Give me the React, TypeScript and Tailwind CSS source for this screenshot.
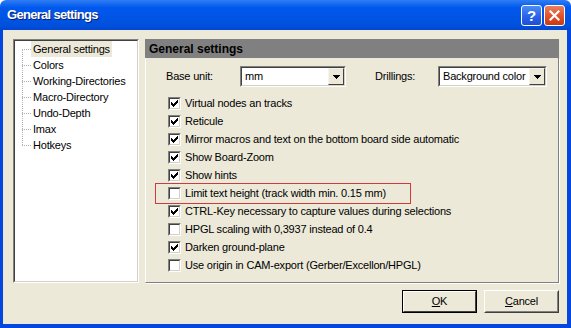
import React from 'react';

const tree = ['General settings', 'Colors', 'Working-Directories', 'Macro-Directory', 'Undo-Depth', 'Imax', 'Hotkeys'];

const options: { label: string; checked: boolean; marked?: boolean }[] = [
  { label: 'Virtual nodes an tracks', checked: true },
  { label: 'Reticule', checked: true },
  { label: 'Mirror macros and text on the bottom board side automatic', checked: true },
  { label: 'Show Board-Zoom', checked: true },
  { label: 'Show hints', checked: true },
  { label: 'Limit text height (track width min. 0.15 mm)', checked: false, marked: true },
  { label: 'CTRL-Key necessary to capture values during selections', checked: true },
  { label: 'HPGL scaling with 0,3937 instead of 0.4', checked: false },
  { label: 'Darken ground-plane', checked: true },
  { label: 'Use origin in CAM-export (Gerber/Excellon/HPGL)', checked: false },
];

function CheckBox({ checked }: { checked: boolean }) {
  return (
    <div className="w-[13px] h-[13px] border border-t-[#808080] border-l-[#808080] border-b-white border-r-white">
      <div className="w-full h-full bg-white border border-t-[#404040] border-l-[#404040] border-b-[#d4d0c8] border-r-[#d4d0c8] flex items-center justify-center">
        {checked && (
          <svg width="7" height="7" viewBox="0 0 7 7" shapeRendering="crispEdges">
            <path d="M0 2h1v3h-1zM1 3h1v3h-1zM2 4h1v3h-1zM3 3h1v3h-1zM4 2h1v3h-1zM5 1h1v3h-1zM6 0h1v3h-1z" fill="#000" />
          </svg>
        )}
      </div>
    </div>
  );
}

function Combo({ value, width }: { value: string; width: string }) {
  return (
    <div className={`${width} h-[21px] border border-t-[#808080] border-l-[#808080] border-b-white border-r-white`}>
      <div className="w-full h-full bg-white border border-t-[#404040] border-l-[#404040] border-b-[#d4d0c8] border-r-[#d4d0c8] flex items-center">
        <span className="flex-1 pl-[3px] whitespace-nowrap overflow-hidden">{value}</span>
        <div className="w-[16px] h-[17px] shrink-0 bg-[#ece9d8] border border-t-[#f4f3ee] border-l-[#f4f3ee] border-b-[#404040] border-r-[#404040] flex items-center justify-center">
          <svg width="7" height="4" viewBox="0 0 7 4" shapeRendering="crispEdges">
            <path d="M0 0h7v1h-7zM1 1h5v1h-5zM2 2h3v1h-3zM3 3h1v1h-1z" fill="#000" />
          </svg>
        </div>
      </div>
    </div>
  );
}

export default function App() {
  return (
    <div
      className="w-[571px] h-[328px] flex flex-col overflow-hidden text-[11px] tracking-[-0.2px] text-black"
      style={{ fontFamily: '"Liberation Sans", Arial, sans-serif' }}
    >
      {/* Title bar */}
      <div className="h-[30px] shrink-0 flex items-center pl-[7px] pr-[6px] rounded-t-[6px] bg-[linear-gradient(to_bottom,#2f7cf5_0%,#1d6ff0_10%,#0058ee_25%,#0054e3_60%,#0050db_88%,#0345d0_100%)]">
        <span className="flex-1 text-white font-bold text-[13px] tracking-[-0.7px] [text-shadow:1px_1px_0_#0a1f6e]">
          General settings
        </span>
        <div className="w-[21px] h-[21px] rounded-[3px] border border-white bg-[linear-gradient(to_bottom,#4d8cf6,#2a63e8_55%,#1c4fd6)] flex items-center justify-center text-white font-bold text-[15px] leading-none">
          ?
        </div>
        <div className="ml-[2px] w-[21px] h-[21px] rounded-[3px] border border-white bg-[linear-gradient(to_bottom,#e8805c,#e0502a_55%,#c63a14)] flex items-center justify-center">
          <svg width="11" height="11" viewBox="0 0 11 11">
            <path d="M1.5 1.5L9.5 9.5M9.5 1.5L1.5 9.5" stroke="#fff" strokeWidth="2.2" strokeLinecap="square" />
          </svg>
        </div>
      </div>

      {/* Body */}
      <div className="flex-1 flex flex-col bg-[#ece9d8] border-l-[3px] border-r-[4px] border-b-[4px] border-[#0347de] pl-[10px] pt-[9px] pr-[8px]">
        <div className="flex gap-[6px] h-[244px]">
          {/* Tree */}
          <div className="w-[126px] h-full border border-t-[#808080] border-l-[#808080] border-b-white border-r-white">
            <div className="relative w-full h-full bg-white border border-t-[#404040] border-l-[#404040] border-b-[#d4d0c8] border-r-[#d4d0c8]">
              <div className="absolute left-[7px] top-[8px] h-[96px] border-l border-dotted border-[#b0b0b0]" />
              {tree.map((t, i) => (
                <div key={t} className="h-[16px] flex items-center">
                  <div className="w-[9px] ml-[7px] border-t border-dotted border-[#b0b0b0]" />
                  <span className={`px-[2px] leading-[16px] ${i === 0 ? 'bg-[#ece9d8]' : ''}`}>{t}</span>
                </div>
              ))}
            </div>
          </div>

          {/* Right panel */}
          <div className="w-[414px] h-full flex flex-col">
            <div className="h-[19px] bg-[#808080] pl-[4px] flex items-center font-bold text-[12px] tracking-normal">General settings</div>
            <div className="flex-1 border-l border-l-white border-r border-r-[#808080] border-b border-b-[#808080] shadow-[1px_1px_0_#fff] pl-[20px] pt-[8px]">
              <div className="flex items-center h-[21px]">
                <span className="w-[74px]">Base unit:</span>
                <Combo value="mm" width="w-[106px]" />
                <span className="ml-[29px] w-[63px]">Drillings:</span>
                <Combo value="Background color" width="w-[109px]" />
              </div>
              <div className="mt-[7px] flex flex-col">
                {options.map((o) => (
                  <div key={o.label} className="relative h-[18px] flex items-center pl-[2px]">
                    {o.marked && (
                      <span className="absolute left-[-11px] top-[-1px] w-[256px] h-[21px] border border-[#d03a3a]" />
                    )}
                    <CheckBox checked={o.checked} />
                    <span className="ml-[4px] whitespace-nowrap">{o.label}</span>
                  </div>
                ))}
              </div>
            </div>
          </div>
        </div>

        {/* Buttons */}
        <div className="mt-[7px] flex justify-end gap-[7px]">
          <div className="w-[75px] h-[23px] border border-black">
            <div className="w-full h-full bg-[#ece9d8] border border-t-white border-l-white border-b-[#404040] border-r-[#404040] flex items-center justify-center">
              <span>
                <span className="underline">O</span>K
              </span>
            </div>
          </div>
          <div className="w-[75px] h-[23px] bg-[#ece9d8] border border-t-white border-l-white border-b-[#404040] border-r-[#404040]">
            <div className="w-full h-full border border-transparent border-b-[#808080] border-r-[#808080] flex items-center justify-center">
              <span>
                <span className="underline">C</span>ancel
              </span>
            </div>
          </div>
        </div>
      </div>
    </div>
  );
}
